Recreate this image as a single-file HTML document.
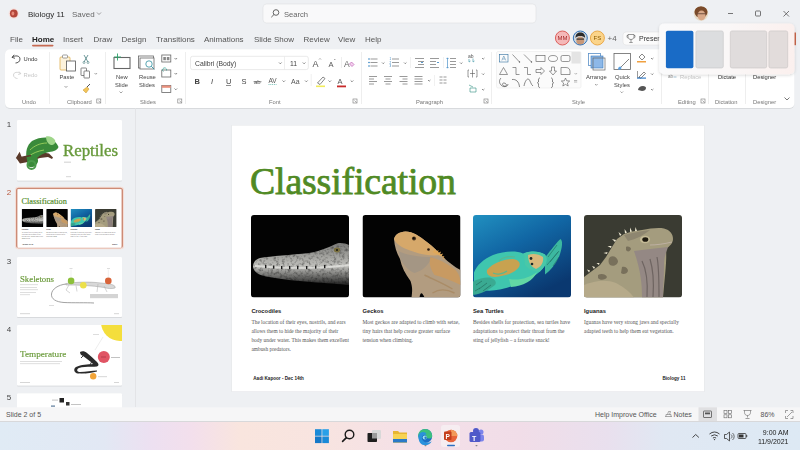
<!DOCTYPE html>
<html><head><meta charset="utf-8">
<style>
*{margin:0;padding:0}
html,body{width:800px;height:450px;overflow:hidden;background:#eef0f3}
svg{position:absolute;left:0;top:0;display:block;filter:blur(0.35px)}
text{font-family:"Liberation Sans",sans-serif}
.sr,.sr text{font-family:"Liberation Serif",serif}
.ui{font-size:8px;fill:#555}
.rl{font-size:5.8px;fill:#444}
.gl{font-size:5.8px;fill:#777}
.st{font-size:7px;fill:#555}
.ic{fill:none;stroke:#555;stroke-width:0.9}
</style></head><body>
<svg width="800" height="450" viewBox="0 0 800 450">
<defs>
  <linearGradient id="tb" x1="0" x2="1" y1="0" y2="0">
    <stop offset="0" stop-color="#e0ebf5"/>
    <stop offset="0.13" stop-color="#e2e8f4"/>
    <stop offset="0.19" stop-color="#ede0f1"/>
    <stop offset="0.24" stop-color="#f3dfec"/>
    <stop offset="0.30" stop-color="#f9e5de"/>
    <stop offset="0.40" stop-color="#f8e4e0"/>
    <stop offset="0.52" stop-color="#f4e0e8"/>
    <stop offset="0.65" stop-color="#f1dde8"/>
    <stop offset="0.76" stop-color="#e9e0ee"/>
    <stop offset="0.83" stop-color="#e0e8f3"/>
    <stop offset="1" stop-color="#dde9f4"/>
  </linearGradient>
  <filter id="sh" x="-5%" y="-5%" width="110%" height="115%">
    <feDropShadow dx="0" dy="0.5" stdDeviation="0.6" flood-color="#000" flood-opacity="0.18"/>
  </filter>
  <filter id="tex" x="0" y="0" width="100%" height="100%">
    <feTurbulence type="fractalNoise" baseFrequency="0.35" numOctaves="2" seed="3" result="n"/>
    <feColorMatrix in="n" type="matrix" values="0 0 0 0 0  0 0 0 0 0  0 0 0 0 0  0 0 0 2.2 -1.0" result="a"/>
    <feComposite in="SourceGraphic" in2="a" operator="in"/>
  </filter>
  <filter id="sh2" x="-10%" y="-10%" width="120%" height="130%">
    <feDropShadow dx="0" dy="1" stdDeviation="1.5" flood-color="#000" flood-opacity="0.16"/>
  </filter>
  <linearGradient id="popg" x1="0" x2="1" y1="0" y2="0">
    <stop offset="0" stop-color="#fafafb"/>
    <stop offset="0.5" stop-color="#faf7f7"/>
    <stop offset="1" stop-color="#fbf0ee"/>
  </linearGradient>
  <linearGradient id="turtbg" x1="0" y1="0" x2="0.6" y2="1">
    <stop offset="0" stop-color="#2190c0"/>
    <stop offset="0.45" stop-color="#1166a4"/>
    <stop offset="1" stop-color="#0a3870"/>
  </linearGradient>
  <linearGradient id="crocg" x1="0" y1="0" x2="0" y2="1">
    <stop offset="0" stop-color="#7a7a78"/>
    <stop offset="0.3" stop-color="#a0a09c"/>
    <stop offset="0.55" stop-color="#c0c0bc"/>
    <stop offset="0.8" stop-color="#6a6a68"/>
    <stop offset="1" stop-color="#1e1e1e"/>
  </linearGradient>
  <clipPath id="pc"><rect x="0" y="0" width="98" height="82.5" rx="3"/></clipPath>
  <g id="s2">
    <rect x="0" y="0" width="472" height="266" fill="#fff"/>
    <text x="18" y="68.2" class="sr" textLength="206" lengthAdjust="spacing" style="font-size:37.8px;fill:#508a24;stroke:#508a24;stroke-width:0.75">Classification</text>
    <!-- croc -->
    <g transform="translate(19,89.5)" clip-path="url(#pc)">
      <rect width="98" height="82.5" fill="#030303"/>
      <path d="M2,52 C2,47 5,44 9,43 C20,41 40,40 58,38 C70,36 78,32 86,28.5 C90,27.5 95,28.5 98,30 L98,70 C88,69 75,68 60,67 C45,66 30,64 18,62 C10,61 3,58 2,52 Z" fill="url(#crocg)"/>
      <path d="M2,52 C2,47 5,44 9,43 C20,41 40,40 58,38 C70,36 78,32 86,28.5 C90,27.5 95,28.5 98,30 L98,70 C88,69 75,68 60,67 C45,66 30,64 18,62 C10,61 3,58 2,52 Z" fill="#000" filter="url(#tex)" opacity="0.42"/>
      <path d="M4,51 C20,52.5 45,53.5 70,52.5 C80,52 90,51 98,50" stroke="#e4e4e0" stroke-width="2" fill="none" opacity="0.8"/>
      <g fill="#1a1a1a">
        <rect x="14" y="50" width="1.4" height="3.2"/><rect x="22" y="50.5" width="1.4" height="3.2"/><rect x="30" y="51" width="1.4" height="3.2"/>
        <rect x="38" y="51" width="1.4" height="3.2"/><rect x="46" y="51" width="1.4" height="3.2"/><rect x="55" y="51" width="1.4" height="3.2"/>
        <rect x="64" y="50.5" width="1.4" height="3.2"/><rect x="73" y="50" width="1.4" height="3.2"/>
      </g>
      <ellipse cx="86" cy="35" rx="3.2" ry="2.4" fill="#7a7040"/>
      <circle cx="86" cy="35" r="1" fill="#1a1a10"/>
    </g>
    <!-- gecko -->
    <g transform="translate(130.5,89.5)" clip-path="url(#pc)">
      <rect width="98" height="82.5" fill="#030303"/>
      <path d="M31.5,24 C33,19 37,17 43,16.5 C50,16.5 57,21 65,27.5 C71,32 76,37 81,42.5 C86,47 92,52 98,55 L98,82.5 L62,82.5 C60,78 58,76 57,82.5 L49,82.5 C50,76 50,72 48,66 C43,59 39,52 37.5,44 C34,38 32,31 31.5,24 Z" fill="#b29c80"/>
      <path d="M31.5,24 C33,19 37,17 43,16.5 C50,16.5 57,21 65,27.5 C70,31 74,35 78,40 C70,41 60,40 52,37 C42,34 34,30 31.5,24 Z" fill="#d6a86a"/>
      <path d="M36,36 C44,40 56,42 70,42 C66,50 60,56 52,58 C46,56 41,50 38,44 Z" fill="#a49684"/>
      <path d="M68,42 C76,44 84,48 92,54 C96,58 98,62 98,70 C90,66 80,62 72,60 C68,54 66,48 68,42 Z" fill="#c89a62"/>
      <path d="M62,60 C70,64 80,68 90,74 M70,78 C76,74 84,74 92,78" stroke="#a88860" stroke-width="1.4" fill="none" opacity="0.8"/>
      <path d="M70,37 l3,-3 l0,3 l3,-2 l-0.5,3 l3,-1.5 l-1,3 l3,-1 l-1.5,3 l3,-0.5 l-2,2.5 l3,0 z" fill="#e0a858"/>
      <circle cx="51.5" cy="23.5" r="2" fill="#4a3420"/>
      <circle cx="51.2" cy="23.2" r="1.1" fill="#140c06"/>
      <circle cx="66" cy="34.5" r="1.3" fill="#2a1a10"/>
    </g>
    <!-- turtle -->
    <g transform="translate(241,89.5)" clip-path="url(#pc)">
      <rect width="98" height="82.5" fill="url(#turtbg)"/>
      <path d="M72,42.5 C78,35 84,27 87.5,24 C90,26 89.5,32 86,42 C82,50 78,55 72,59.5 Z" fill="#3cb8a0"/>
      <path d="M75,42 l9,-12 M77,47 l8,-10 M80,51 l6,-9 M74,50 l12,-14" stroke="#164a48" stroke-width="0.7" opacity="0.6"/>
      <path d="M1,57.5 C4,50 10,44.5 20,40 C30,36.5 42,35 50,38.5 C56,36 64,35.5 72,39.5 C75,44 74,50 67,56.5 C58,64 47,70 27,74.5 C17,76.5 8,76 1,72 Z" fill="#3fc6ae"/>
      <path d="M14,55 C20,48 30,44 40,44 C46,45 48,48 46,52 C42,58 32,61 22,62 C16,62 13,59 14,55 Z" fill="#c8a250"/>
      <path d="M26,46 C30,42 36,41 42,42 M20,58 c4,2 10,1 14,-2" stroke="#5ab890" stroke-width="1.2" fill="none"/>
      <path d="M51,38.5 C58,35.5 66,36 72,39.5 C75,44 74,50 67,56.5 C62,57 56,55 52,50 Z" fill="#48c8a8"/>
      <path d="M55,40 C60,38 66,39 70,42 C71,47 68,52 63,54 C58,52 55,47 55,40 Z" fill="#d8b87a"/>
      <circle cx="58" cy="43.5" r="1.4" fill="#1a2a2a"/><circle cx="59" cy="49" r="1.3" fill="#1a2a2a"/>
      <path d="M36,64 C46,66 56,63 64,57 C60,66 50,71 38,72 Z" fill="#62d8a4"/>
      <path d="M0,66.5 C6,63 13,62 17,62.5 C22,64 24,67 22,70 C16,75 8,79 0,80 Z" fill="#3aaa92"/>
      <path d="M3,70 l6,-4 M6,74 l8,-6 M10,76 l8,-6 M2,76 l5,-3" stroke="#164a40" stroke-width="0.7" opacity="0.6"/>
    </g>
    <!-- iguana -->
    <g transform="translate(352,89.5)" clip-path="url(#pc)">
      <rect width="98" height="82.5" fill="#3a3b32"/>
      <path d="M0,62 L8,56 L16,50 L22,42 L28,32 L33,24 L40,19 L48,16.5 L58,15 C66,13.5 74,12.5 80,13.5 C86,15 89,19 89,24 C89,28 86,31 82,34 C83,45 81,60 79,82.5 L0,82.5 Z" fill="#a49c7e"/>
      <path d="M50,36 C60,35 72,33 84,32 C82,38 80,42 80,50 C80,62 79,72 79,82.5 L58,82.5 C58,70 57,56 50,36 Z" fill="#948884"/>
      <path d="M58,46 c4,8 6,20 5,36 M66,44 c3,10 4,24 3,38 M73,42 c2,10 2,26 2,40" stroke="#5e5552" stroke-width="1.2" fill="none" opacity="0.7"/>
      <path d="M0,70 C10,66 22,64 32,68 C40,72 46,77 50,82.5 L0,82.5 Z" fill="#b6aa8a"/>
      <path d="M26,42 c3,-2 7,0 8,4 c0,4 -5,6 -8,4 c-2,-2 -2,-6 0,-8 z M14,60 c3,-2 8,-1 9,2 c-1,3 -7,4 -9,1 z M38,52 c3,-1 6,1 6,4 c-1,3 -5,4 -7,2 z M42,32 c2,-1 5,0 5,2 c-1,3 -4,3 -5,1 z" fill="#5c5444" opacity="0.6"/>
      <path d="M40,20 C48,18 56,16 66,15 C60,20 52,24 44,26 Z" fill="#8e8670"/>
      <g fill="#ece6d0">
        <path d="M36,21 l-1.5,-4 l3,2.5 z"/><path d="M41,18.5 l-0.5,-4.5 l2.5,3.5 z"/><path d="M46,17 l0,-4.5 l2,4 z"/><path d="M51,16 l0.5,-4 l1.5,4 z"/>
        <path d="M31,27 l-3,-3 l4,1 z"/><path d="M27,33 l-3.5,-2 l4,0 z"/><path d="M23,39 l-3.5,-1 l4,-1 z"/>
        <path d="M10,54 l-2,-3 l3,1 z"/><path d="M5,57.5 l-2,-3 l3,1 z"/><path d="M15,50 l-2.5,-2 l3,0 z"/>
      </g>
      <ellipse cx="61" cy="24.5" rx="5" ry="3.8" fill="#c4ba96"/>
      <ellipse cx="61.3" cy="24.5" rx="3" ry="2.3" fill="#1e1a10"/>
      <path d="M66,30 C72,30 80,29 88,27" stroke="#c8b8b0" stroke-width="1" fill="none" opacity="0.7"/>
    </g>
    <g style="font-size:5.8px;font-weight:bold;fill:#222">
      <text x="19.4" y="187.2">Crocodiles</text>
      <text x="130.5" y="187.2">Geckos</text>
      <text x="241" y="187.2">Sea Turtles</text>
      <text x="352" y="187.2">Iguanas</text>
    </g>
    <g class="sr" style="font-size:5.4px;fill:#555">
      <text x="19.4" y="198.8">The location of their eyes, nostrils, and ears</text>
      <text x="19.4" y="207.7">allows them to hide the majority of their</text>
      <text x="19.4" y="216.6">body under water. This makes them excellent</text>
      <text x="19.4" y="225.5">ambush predators.</text>
      <text x="130.5" y="198.8">Most geckos are adapted to climb with setae,</text>
      <text x="130.5" y="207.7">tiny hairs that help create greater surface</text>
      <text x="130.5" y="216.6">tension when climbing.</text>
      <text x="241" y="198.8">Besides shells for protection, sea turtles have</text>
      <text x="241" y="207.7">adaptations to protect their throat from the</text>
      <text x="241" y="216.6">sting of jellyfish – a favorite snack!</text>
      <text x="352" y="198.8">Iguanas have very strong jaws and specially</text>
      <text x="352" y="207.7">adapted teeth to help them eat vegetation.</text>
    </g>
    <g style="font-size:4.6px;font-weight:bold;fill:#222">
      <text x="21.3" y="254.4">Aadi Kapoor - Dec 14th</text>
      <text x="430.5" y="254.4">Biology 11</text>
    </g>
  </g>
</defs>

<!-- ===== TITLE BAR ===== -->
<g id="titlebar">
  <circle cx="13.8" cy="13.5" r="5.2" fill="#f6e2df"/>
  <circle cx="13.8" cy="13.5" r="3.9" fill="#b4463a"/>
  <ellipse cx="12.9" cy="13.6" rx="1.4" ry="2" fill="#f29a88" opacity="0.8"/>
  <text x="28" y="17" class="ui" style="fill:#2a2a2a">Biology 11</text>
  <text x="72" y="17" class="ui" style="fill:#666">Saved</text>
  <path d="M97 12.5 l2 2 l2 -2" fill="none" stroke="#777" stroke-width="0.7"/>
  <rect x="263" y="4" width="273" height="19" rx="3.5" fill="#f9f9fa" stroke="#dedfe2" stroke-width="0.6"/>
  <circle cx="276" cy="12.5" r="2.8" class="ic" style="stroke:#555"/>
  <path d="M274 14.5 l-2.7 2.7" class="ic"/>
  <text x="284" y="16.6" class="ui" style="font-size:7.6px;fill:#666">Search</text>
  <clipPath id="av1"><circle cx="701" cy="13.5" r="7.3"/></clipPath>
  <g clip-path="url(#av1)">
    <rect x="693" y="5" width="16" height="17" fill="#e8dcc8"/>
    <ellipse cx="701" cy="12" rx="6.5" ry="6" fill="#7a4a2a"/>
    <ellipse cx="701.5" cy="15.5" rx="4" ry="5" fill="#d8a888"/>
    <rect x="697" y="13" width="9" height="1.3" fill="#6a4a3a" opacity="0.7"/>
  </g>
  <path d="M728 13.5 h5" stroke="#555" stroke-width="0.8"/>
  <rect x="755.5" y="11" width="5" height="5" rx="0.8" class="ic" style="stroke-width:0.8"/>
  <path d="M783.5 11 l5.5 5.5 M789 11 l-5.5 5.5" stroke="#555" stroke-width="0.8"/>
</g>

<!-- ===== TABS ===== -->
<g id="tabs">
  <text x="10" y="42" class="ui">File</text>
  <text x="32" y="42" class="ui" style="fill:#222;font-weight:bold">Home</text>
  <rect x="32" y="44.8" width="21.5" height="1.6" rx="0.8" fill="#c66a52"/>
  <text x="63" y="42" class="ui">Insert</text>
  <text x="93.5" y="42" class="ui">Draw</text>
  <text x="121.5" y="42" class="ui">Design</text>
  <text x="156" y="42" class="ui">Transitions</text>
  <text x="204" y="42" class="ui">Animations</text>
  <text x="254" y="42" class="ui">Slide Show</text>
  <text x="303.5" y="42" class="ui">Review</text>
  <text x="338" y="42" class="ui">View</text>
  <text x="365" y="42" class="ui">Help</text>
  <!-- collaborators -->
  <circle cx="562.4" cy="38" r="7" fill="#f4b8b8" stroke="#d9534f" stroke-width="0.9"/>
  <text x="562.4" y="40.2" text-anchor="middle" style="font-size:6px;fill:#a52a2a">MM</text>
  <circle cx="580.3" cy="38" r="7" fill="#cfd8e0" stroke="#2f6fb5" stroke-width="1"/>
  <clipPath id="av2"><circle cx="580.3" cy="38" r="6.4"/></clipPath>
  <g clip-path="url(#av2)">
    <ellipse cx="580.3" cy="41" rx="4" ry="4.5" fill="#c89878"/>
    <path d="M575.5 38 c0 -4 2 -5.5 4.8 -5.5 c3 0 4.8 1.5 4.8 5.5 c-1 -1.5 -3 -2 -4.8 -2 c-2 0 -3.8 0.5 -4.8 2 z" fill="#2a2a2a"/>
    <rect x="576.5" y="38.5" width="7.6" height="1.2" fill="#333"/>
    <rect x="574" y="44" width="13" height="4" fill="#5a6a8a"/>
  </g>
  <circle cx="597.4" cy="38" r="7" fill="#fbd48a" stroke="#e8a33d" stroke-width="0.9"/>
  <text x="597.4" y="40.2" text-anchor="middle" style="font-size:6px;fill:#8a5a00">FS</text>
  <text x="607.5" y="41" class="ui" style="fill:#666">+4</text>
  <rect x="623" y="32" width="45" height="13" rx="3" fill="#fbfbfb" stroke="#dddddd" stroke-width="0.5"/>
  <text x="639" y="41.3" style="font-size:7px;fill:#333">Presen</text>
  <path d="M628 34.5 h6 v2 c0 2 -1.3 3 -3 3 c-1.7 0 -3 -1 -3 -3 z M631 39.5 v2.5 M629.3 42.5 h3.4 M628 35.5 h-1 v1 c0 1 0.5 1.5 1.2 1.5 M634 35.5 h1 v1 c0 1 -0.5 1.5 -1.2 1.5" fill="none" stroke="#555" stroke-width="0.6"/>
</g>

<!-- ===== RIBBON ===== -->
<rect x="5" y="49.3" width="789.5" height="58.6" rx="5" fill="#fff" filter="url(#sh)"/>
<g id="ribbon">
  <!-- separators -->
  <g fill="#e3e3e3">
    <rect x="49" y="52" width="0.6" height="52"/>
    <rect x="105" y="52" width="0.6" height="52"/>
    <rect x="185.3" y="52" width="0.6" height="52"/>
    <rect x="361.3" y="52" width="0.6" height="52"/>
    <rect x="491.3" y="52" width="0.6" height="52"/>
    <rect x="661" y="52" width="0.6" height="52"/>
    <rect x="708.4" y="52" width="0.6" height="52"/>
    <rect x="745" y="52" width="0.6" height="52"/>
  </g>
  <!-- group labels -->
  <g class="gl">
    <text x="22" y="103.5">Undo</text>
    <text x="67" y="103.5">Clipboard</text>
    <text x="140" y="103.5">Slides</text>
    <text x="269" y="103.5">Font</text>
    <text x="416" y="103.5">Paragraph</text>
    <text x="572" y="103.5">Style</text>
    <text x="678" y="103.5">Editing</text>
    <text x="715" y="103.5">Dictation</text>
    <text x="753" y="103.5">Designer</text>
  </g>
  <!-- launchers -->
  <g fill="none" stroke="#777" stroke-width="0.6">
    <rect x="96.8" y="99" width="4" height="4"/><path d="M98.3 100.5 l2 2"/>
    <rect x="177.8" y="99" width="4" height="4"/><path d="M179.3 100.5 l2 2"/>
    <rect x="353" y="99" width="4" height="4"/><path d="M354.5 100.5 l2 2"/>
    <rect x="484" y="99" width="4" height="4"/><path d="M485.5 100.5 l2 2"/>
    <rect x="701" y="99" width="4" height="4"/><path d="M702.5 100.5 l2 2"/>
  </g>
  <path d="M784.5 97.5 l2.5 2.5 l2.5 -2.5" fill="none" stroke="#555" stroke-width="0.8"/>
  <!-- Undo group -->
  <path d="M14.2 54.8 l-2.2 2.6 l3 0.9 M12.2 57.4 C15 55 20 55.5 20 59 C20 61.8 17.5 63 15.5 63" fill="none" stroke="#444" stroke-width="0.9"/>
  <text x="23.5" y="60.5" class="rl" style="fill:#333">Undo</text>
  <path d="M19 71.5 l1.8 2.2 l-2.6 0.8 M20.6 73.6 C18 71.5 13.5 72 13.5 75 C13.5 77.5 16 78.5 17.5 78.5" fill="none" stroke="#ccc" stroke-width="0.8"/>
  <text x="23.5" y="76.5" class="rl" style="fill:#c8c8c8">Redo</text>
  <!-- Clipboard -->
  <rect x="60" y="57" width="10" height="13" rx="1" fill="#fdf3dc" stroke="#e0b050" stroke-width="0.8"/>
  <rect x="62.5" y="55" width="5" height="3" rx="0.8" fill="#fff" stroke="#777" stroke-width="0.7"/>
  <rect x="66.5" y="61" width="9" height="10" fill="#fff" stroke="#555" stroke-width="0.8"/>
  <text x="59.5" y="79" class="rl">Paste</text>
  <path d="M64.5 86 l1.5 1.5 l1.5 -1.5" fill="none" stroke="#666" stroke-width="0.6"/>
  <path d="M84 55 l4 7 M88 55 l-4 7" stroke="#4a7f80" stroke-width="0.8"/>
  <circle cx="84" cy="62.5" r="1" fill="none" stroke="#4a7f80" stroke-width="0.6"/>
  <circle cx="88" cy="62.5" r="1" fill="none" stroke="#4a7f80" stroke-width="0.6"/>
  <rect x="81" y="68" width="5.5" height="7.5" rx="0.5" fill="none" stroke="#555" stroke-width="0.7"/>
  <rect x="84" y="71" width="5.5" height="7" rx="0.5" fill="#fff" stroke="#555" stroke-width="0.7"/>
  <path d="M94.5 73 l1.3 1.3 l1.3 -1.3" fill="none" stroke="#666" stroke-width="0.6"/>
  <path d="M83 90 l4 -3 l2 2 l-3 4 z" fill="#f2c45a" stroke="#c9962a" stroke-width="0.5"/>
  <path d="M87 87 l3 -3" stroke="#555" stroke-width="1"/>
  <!-- Slides -->
  <rect x="114" y="57.5" width="16" height="11" fill="none" stroke="#666" stroke-width="1.1"/>
  <path d="M117.5 53.5 v7 M114 57 h7" stroke="#2aa36a" stroke-width="0.9"/>
  <text x="116" y="79" class="rl">New</text>
  <text x="115" y="87" class="rl">Slide</text>
  <path d="M119.5 91.5 l1.5 1.5 l1.5 -1.5" fill="none" stroke="#666" stroke-width="0.6"/>
  <rect x="138.5" y="56" width="15" height="12" fill="none" stroke="#666" stroke-width="0.8"/>
  <rect x="140" y="58" width="14" height="11" fill="#fff" stroke="#666" stroke-width="0.8"/>
  <circle cx="149" cy="64" r="3.2" fill="#fff" stroke="#2f8f9f" stroke-width="0.8"/>
  <path d="M151.3 66.3 l3 3" stroke="#2f8f9f" stroke-width="0.9"/>
  <text x="139" y="79" class="rl">Reuse</text>
  <text x="139" y="87" class="rl">Slides</text>
  <rect x="161.8" y="55" width="9" height="7" fill="#fff" stroke="#666" stroke-width="0.8"/>
  <rect x="163.3" y="57" width="2.6" height="3.2" fill="#888"/><rect x="166.8" y="57" width="2.6" height="3.2" fill="#888"/>
  <rect x="161.8" y="70" width="9" height="7" fill="#fff" stroke="#666" stroke-width="0.8"/>
  <path d="M163.5 71.5 a2 2 0 1 1 3 -1" fill="none" stroke="#2f9f8f" stroke-width="0.7"/>
  <rect x="161.8" y="85.5" width="9" height="7" fill="#fff" stroke="#666" stroke-width="0.8"/>
  <rect x="161.8" y="85.5" width="9" height="2.3" fill="#e98f7c"/>
  <g fill="none" stroke="#666" stroke-width="0.75">
    <path d="M174.5 58 l1.3 1.3 l1.3 -1.3"/><path d="M174.5 73 l1.3 1.3 l1.3 -1.3"/><path d="M174.5 88.5 l1.3 1.3 l1.3 -1.3"/>
  </g>
  <!-- Font -->
  <rect x="190.5" y="56.3" width="117.8" height="13.3" rx="2" fill="#fff" stroke="#dcdcdc" stroke-width="0.6"/>
  <rect x="284.3" y="56.5" width="0.6" height="13" fill="#e3e3e3"/>
  <text x="195" y="66" style="font-size:6.8px;fill:#444">Calibri (Body)</text>
  <text x="290" y="66" style="font-size:6.8px;fill:#444">11</text>
  <path d="M279 62.5 l1.3 1.3 l1.3 -1.3 M302.8 62.5 l1.3 1.3 l1.3 -1.3" fill="none" stroke="#666" stroke-width="0.75"/>
  <text x="312.5" y="67" style="font-size:9px;fill:#555">A</text>
  <path d="M319 59.5 l1 -1 l1 1" fill="none" stroke="#555" stroke-width="0.5"/>
  <text x="328.5" y="67" style="font-size:7.5px;fill:#555">A</text>
  <path d="M334 59 l0.8 0.8 l0.8 -0.8" fill="none" stroke="#555" stroke-width="0.5"/>
  <rect x="341" y="57" width="0.6" height="11" fill="#e3e3e3"/>
  <text x="344" y="67" style="font-size:8.5px;fill:#666">A</text>
  <path d="M349.5 64 l2.5 2.5 l2 -2 l-2.5 -2.5 z" fill="#f5d0ee" stroke="#b04aa8" stroke-width="0.6"/>
  <g style="font-size:7.5px;fill:#444">
    <text x="194.5" y="84" style="font-weight:bold">B</text>
    <text x="211" y="84" style="font-style:italic">I</text>
    <text x="226" y="83.5">U</text>
    <text x="241.5" y="84">S</text>
  </g>
  <rect x="226" y="85" width="5" height="0.6" fill="#444"/>
  <text x="254" y="83.5" style="font-size:6px;fill:#555">ab</text>
  <rect x="253.5" y="81.5" width="8" height="0.6" fill="#555"/>
  <text x="268.5" y="82.5" style="font-size:6.5px;fill:#555">AV</text>
  <path d="M268.5 84.5 h8" stroke="#2f9f8f" stroke-width="0.6" stroke-dasharray="1 0.8"/>
  <text x="291" y="84" style="font-size:7px;fill:#555">Aa</text>
  <rect x="310.8" y="74" width="0.6" height="12" fill="#e3e3e3"/>
  <path d="M317.5 83 l5.5 -6 l2 1.5 l-5 6 z" fill="#fff" stroke="#555" stroke-width="0.7"/>
  <rect x="316" y="85.5" width="9" height="1.6" fill="#f1ec5c"/>
  <text x="337.5" y="84" style="font-size:7.5px;fill:#555">A</text>
  <rect x="337" y="85.5" width="9" height="1.8" fill="#c82a2a"/>
  <g fill="none" stroke="#666" stroke-width="0.75">
    <path d="M282.5 80.5 l1.3 1.3 l1.3 -1.3"/><path d="M305 80.5 l1.3 1.3 l1.3 -1.3"/><path d="M328.5 80.5 l1.3 1.3 l1.3 -1.3"/><path d="M350.7 80.5 l1.3 1.3 l1.3 -1.3"/>
  </g>
  <!-- Paragraph -->
  <g stroke="#555" stroke-width="0.6" fill="none">
    <path d="M370.5 59 h7 M370.5 62.5 h7 M370.5 66 h7"/>
    <path d="M392 59 h7 M392 62.5 h7 M392 66 h7"/>
    <path d="M415 58.5 h9 M418 61.5 h6 M418 64.5 h6 M415 67.5 h9"/>
    <path d="M430 58.5 h9 M430 61.5 h6 M430 64.5 h6 M430 67.5 h9"/>
    <path d="M450 58.5 h6 M450 61.5 h6 M450 64.5 h6 M450 67.5 h6"/>
    <path d="M369 76.5 h8 M369 79 h5 M369 81.5 h8 M369 84 h5"/>
    <path d="M384 76.5 h8 M385.5 79 h5 M384 81.5 h8 M385.5 84 h5"/>
    <path d="M399.5 76.5 h8 M402.5 79 h5 M399.5 81.5 h8 M402.5 84 h5"/>
    <path d="M414.5 76.5 h8 M414.5 79 h8 M414.5 81.5 h8 M414.5 84 h8"/>
    <path d="M439.5 77 h3 M439.5 80 h3 M439.5 83 h3 M443.5 77 h3 M443.5 80 h3 M443.5 83 h3"/>
  </g>
  <g fill="#2f7fbf">
    <circle cx="369" cy="59" r="0.8"/><circle cx="369" cy="62.5" r="0.8"/><circle cx="369" cy="66" r="0.8"/>
  </g>
  <g style="font-size:3px;fill:#2f7fbf"><text x="389.5" y="60">1</text><text x="389.5" y="63.5">2</text><text x="389.5" y="67">3</text></g>
  <path d="M421 62.5 l2 0 M437 62.5 l2 0" stroke="#2f7fbf" stroke-width="0.8"/>
  <path d="M447.5 58 v10 M446.5 59 l1 -1.2 l1 1.2 M446.5 67 l1 1.2 l1 -1.2" fill="none" stroke="#2f7fbf" stroke-width="0.6"/>
  <rect x="410" y="57" width="0.5" height="11" fill="#e3e3e3"/>
  <rect x="443" y="57" width="0.5" height="11" fill="#e3e3e3"/>
  <rect x="434" y="75" width="0.5" height="11" fill="#e3e3e3"/>
  <g fill="none" stroke="#666" stroke-width="0.75">
    <path d="M382 62.5 l1.2 1.2 l1.2 -1.2"/><path d="M404 62.5 l1.2 1.2 l1.2 -1.2"/><path d="M460 62.5 l1.2 1.2 l1.2 -1.2"/><path d="M428 80 l1.2 1.2 l1.2 -1.2"/>
    <path d="M482 58 l1.2 1.2 l1.2 -1.2"/><path d="M482 73.5 l1.2 1.2 l1.2 -1.2"/><path d="M482 89 l1.2 1.2 l1.2 -1.2"/>
  </g>
  <text x="468" y="57.5" style="font-size:5px;fill:#555">ab</text>
  <path d="M469 59 v3 l1.5 -1 M473 58.5 v3.5 l1.5 -1" fill="none" stroke="#2f8f9f" stroke-width="0.6"/>
  <path d="M469 70 h-1 v7 h1 M476 70 h1 v7 h-1 M472.5 69.5 v8 M470 73.5 h5" fill="none" stroke="#555" stroke-width="0.6"/>
  <path d="M469 85 l4 2 M470 88 h6 v4 h-6 z" fill="none" stroke="#2f8f7f" stroke-width="0.6"/>
  <!-- Shapes gallery -->
  <rect x="496.5" y="51.5" width="84.5" height="36.5" rx="1.5" fill="#fbfbfb" stroke="#e6e6e6" stroke-width="0.5"/>
  <rect x="571.5" y="52" width="9.2" height="11.5" fill="#e4e4e4"/>
  <path d="M574.5 73 l1.3 1.3 l1.3 -1.3 M574 80.5 h3.2 M574 82 h3.2" fill="none" stroke="#777" stroke-width="0.5"/>
  <g fill="none" stroke="#555" stroke-width="0.6">
    <rect x="499.5" y="54.5" width="8.5" height="7.5" stroke="#2f6f9f"/><path d="M501.8 60.5 l2 -4.5 l2 4.5 M502.5 59 h2.6" stroke-width="0.45" stroke="#2f6f9f"/>
    <path d="M512.5 54.5 l7 7.5"/>
    <path d="M524 54.5 l7.5 7.5"/>
    <rect x="536" y="55.5" width="9" height="6"/>
    <ellipse cx="553" cy="58.5" rx="4.5" ry="3"/>
    <rect x="561" y="55.5" width="9" height="6" rx="1.5"/>
    <path d="M499.5 74.5 l4 -7 l4 7 z"/>
    <path d="M512.5 67.5 h3.5 v7 h3.5"/>
    <path d="M524 67.5 h3.5 v7 h3.5"/>
    <path d="M536 69.5 h5 v-2 l3.5 3.5 l-3.5 3.5 v-2 h-5 z"/>
    <path d="M551.5 67 h3 v4 h2 l-3.5 4 l-3.5 -4 h2 z"/>
    <path d="M561 67.5 h5 c3 0 4 2 4 4 v3 h-9 z"/>
    <path d="M501 78 c-2 2 -2 5 0 7 c2 2 4 2 5 1 c1 -1 0 -3 -2 -3 c-2 0 -2 2 0 3 c2 1 4 0 4 -2" stroke-width="0.7"/>
    <path d="M512 79.5 c4 -0.5 7 2 7.5 7.5" stroke-width="0.7"/>
    <path d="M524 86 c1 -5 3 -7.5 4.5 -7 c1.5 0.5 2.5 6 4.5 7" stroke-width="0.7"/>
    <path d="M540 78 c-1.2 0 -1.5 0.8 -1.5 2 v2 l-1.2 0.8 l1.2 0.8 v2 c0 1.2 0.3 2 1.5 2" stroke-width="0.7"/>
    <path d="M551 78 c1.2 0 1.5 0.8 1.5 2 v2 l1.2 0.8 l-1.2 0.8 v2 c0 1.2 -0.3 2 -1.5 2" stroke-width="0.7"/>
    <path d="M565.5 78 l1.2 2.8 l3 0.2 l-2.3 2 l0.8 3 l-2.7 -1.6 l-2.7 1.6 l0.8 -3 l-2.3 -2 l3 -0.2 z"/>
  </g>
  <circle cx="519.5" cy="62" r="0.7" fill="#555"/><circle cx="531.5" cy="62" r="0.7" fill="#555"/>
  <!-- Arrange / Quick styles -->
  <rect x="588.5" y="53.5" width="12" height="12" fill="none" stroke="#5a8fc8" stroke-width="0.8"/>
  <rect x="591" y="56" width="12" height="12" fill="#8db8e8" stroke="#3a78b8" stroke-width="0.6"/>
  <rect x="593" y="58" width="12" height="12" fill="none" stroke="#666" stroke-width="0.7"/>
  <text x="586" y="79" class="rl">Arrange</text>
  <path d="M595 84 l1.3 1.3 l1.3 -1.3" fill="none" stroke="#666" stroke-width="0.6"/>
  <rect x="614" y="53.5" width="16.5" height="16" fill="#fff" stroke="#666" stroke-width="0.8"/>
  <path d="M619 69 l10 -10" stroke="#666" stroke-width="0.8"/>
  <path d="M618 69.5 c0 -2 1 -3 2.5 -3 l1 1 c0 1.5 -1 2.5 -3.5 2 z" fill="#5aa0e0"/>
  <text x="615" y="79" class="rl">Quick</text>
  <text x="614" y="87" class="rl">Styles</text>
  <path d="M620.5 91.5 l1.3 1.3 l1.3 -1.3" fill="none" stroke="#666" stroke-width="0.6"/>
  <path d="M639 57 l3 -3 l3 3 l-3 3 z" fill="#fff" stroke="#555" stroke-width="0.7"/>
  <rect x="637" y="61" width="9" height="1.5" fill="#f0a040"/>
  <path d="M639 77 l5 -5 l1.5 1.5 l-5 5 z" fill="#fff" stroke="#555" stroke-width="0.7"/>
  <path d="M637.5 71 v6.5 h3" fill="none" stroke="#555" stroke-width="0.6"/>
  <rect x="637" y="77.5" width="9" height="1.2" fill="#3a7fc8"/>
  <path d="M638 90 c0 -2 2 -4 5 -4 c2 0 3 1 3 2 c0 2 -2 3 -4 3 z" fill="#555"/>
  <g fill="none" stroke="#666" stroke-width="0.75">
    <path d="M651 58 l1.2 1.2 l1.2 -1.2"/><path d="M651 73.5 l1.2 1.2 l1.2 -1.2"/><path d="M651 89 l1.2 1.2 l1.2 -1.2"/>
  </g>
  <text x="718" y="79" class="rl" style="fill:#333">Dictate</text>
  <text x="753" y="79" class="rl" style="fill:#333">Designer</text>
  <text x="680" y="79" class="rl" style="fill:#c8c8c8">Replace</text><text x="668" y="78" style="font-size:4.5px;fill:#888">ab</text><path d="M673.5 77 h3" fill="none" stroke="#6a9ab8" stroke-width="0.6"/>
</g>

<!-- ===== LEFT PANE ===== -->
<rect x="135" y="108" width="0.8" height="299" fill="#e0e1e4"/>
<g id="thumbs">
  <g style="font-size:8px;fill:#444">
    <text x="6.8" y="127">1</text>
    <text x="6.8" y="263.5">3</text>
    <text x="6.8" y="332">4</text>
    <text x="6.8" y="399.5">5</text>
  </g>
  <text x="6.8" y="195.2" style="font-size:8px;fill:#b8583c">2</text>
  <!-- thumb 1 -->
  <g filter="url(#sh)">
    <rect x="17" y="120" width="105" height="60.5" rx="1" fill="#fff"/>
    <rect x="17" y="257" width="105" height="60" rx="1" fill="#fff"/>
    <rect x="17" y="325" width="105" height="60.5" rx="1" fill="#fff"/>
    <rect x="17" y="393.2" width="105" height="20" rx="1" fill="#fff"/>
  </g>
  <g id="t1">
    <path d="M16.5 158.5 l3 -5 l1.5 4 l10 -2 l12 -3 l6 1 l4 4 l-1 1.5 l-4 -2 l-8 1 l-12 4 l-8 1.5 z" fill="#5a3a2a"/>
    <path d="M27 160 C25 152 27 145 32 141 C37 138 43 137 48 137.5 C53 139 57 143 58.5 147 C57.5 150 54 151.5 49 152 C44 153 40 155 37 158 C39 160 38 163 36 165 C33 168 29 168 27.5 165 Z" fill="#3a8a3a"/>
    <path d="M46 136.5 C49 135.5 53 137 55 140 C56 143 54 145 51 145 C48 144 46 141 46 136.5 Z" fill="#9fd68a"/>
    <path d="M30 150 C34 146 40 143 47 143 M29 156 C33 153 38 151 44 150" stroke="#a8d860" stroke-width="1" fill="none" opacity="0.8"/>
    <circle cx="31.5" cy="165" r="4" fill="none" stroke="#4a9a4a" stroke-width="2"/>
    <path d="M16.5 158.5 l3 -5 l1.5 4 l10 -2" fill="none" stroke="#5a3a2a" stroke-width="1.5"/>
  <text x="63" y="155.8" class="sr" textLength="55" lengthAdjust="spacing" style="font-size:16.8px;fill:#689a3c;stroke:#689a3c;stroke-width:0.4">Reptiles</text>
    <rect x="64" y="161.8" width="7" height="0.6" fill="#b0b0b0"/>
    <rect x="66" y="176.5" width="5" height="0.6" fill="#bbb"/>
  </g>
  <!-- thumb 2 (selected) -->
  <rect x="15.6" y="187.3" width="107.8" height="61.4" rx="2.6" fill="none" stroke="#f4ddd6" stroke-width="1.2"/>
  <rect x="16.9" y="188.6" width="105.2" height="58.8" rx="1.8" fill="#fff" stroke="#cd8b76" stroke-width="1.8"/>
  <g transform="translate(17.5,189.2) scale(0.2203)"><use href="#s2"/></g>
  <!-- thumb 3 -->
  <g id="t3">
    <text x="20" y="281.5" class="sr" style="font-size:8.75px;fill:#6a9a3a;stroke:#6a9a3a;stroke-width:0.15">Skeletons</text>
    <g fill="#c8c8c8"><rect x="20" y="284.5" width="18" height="0.6"/><rect x="20" y="287" width="17" height="0.6"/><rect x="20" y="289.5" width="18" height="0.6"/><rect x="20" y="292" width="16" height="0.6"/><rect x="20" y="294.5" width="10" height="0.6"/></g>
    <path d="M66 284 C58 285 52 289 51.5 294 C51 299 56 302 64 302.5 C74 303 86 302.5 94 303" fill="none" stroke="#8a8a8a" stroke-width="0.8"/>
    <path d="M66 283.5 C74 282.5 84 281.5 96 282.5 C102 283 106 283.5 110 284 C114 285 116 286.5 115 288 C112 289 107 288.5 104 287.5 C92 285.5 78 285 66 285 Z" fill="#d8d8d8" stroke="#8a8a8a" stroke-width="0.4"/>
    <rect x="90" y="294" width="28" height="4.2" fill="#d4d4d4"/>
    <path d="M69 285 l-3 5 l4 3 M76 285.5 l1 6 M98 284 l-1 8 M104 286 l3 6" fill="none" stroke="#aaa" stroke-width="0.5"/>
    <circle cx="71.1" cy="280.9" r="3.3" fill="#8cc03a"/>
    <circle cx="83.3" cy="285.3" r="3.3" fill="#ece04a"/>
    <circle cx="108.3" cy="280.9" r="3.3" fill="#d8643a"/>
    <path d="M71 277.5 v-8 M108.3 277.5 v-8" stroke="#ccc" stroke-width="0.3"/>
    <rect x="69.5" y="268" width="3" height="0.5" fill="#bbb"/><rect x="107" y="268" width="3" height="0.5" fill="#bbb"/>
    <rect x="49" y="305" width="5" height="0.5" fill="#bbb"/>
    <rect x="20" y="313.5" width="10" height="0.6" fill="#bbb"/>
    <rect x="114" y="313.5" width="5" height="0.6" fill="#bbb"/>
  </g>
  <!-- thumb 4 -->
  <g id="t4">
    <clipPath id="t4c"><rect x="17" y="325" width="105" height="60.5"/></clipPath>
    <g clip-path="url(#t4c)">
      <circle cx="120" cy="322" r="19" fill="#f4de3c"/>
    </g>
    <text x="20" y="357" class="sr" style="font-size:9.2px;fill:#6a9a3a;stroke:#6a9a3a;stroke-width:0.15">Temperature</text>
    <g fill="#c8c8c8"><rect x="20" y="361" width="42" height="0.6"/><rect x="20" y="363.5" width="40" height="0.6"/></g>
    <path d="M103 337 l-8 13" stroke="#ccc" stroke-width="0.35"/>
    <rect x="93" y="334" width="6" height="0.5" fill="#bbb"/>
    <path d="M80 352 C82 350.5 85 351 87 353 C90 355.5 94 359 97 362 C99 364 99 366 97 366.5 C92 367 84 366 79 368 C76 369.5 77 372 80 372 C86 372 92 370.5 97 370.5 L97 371.5 C92 373 84 374 78 373.5 C74 373 73 369 76 367 C81 364.5 88 364.5 93 364 C90 361 86 358 83 356 C81 355 80 354 80 352 Z" fill="#2a2a2a"/>
    <path d="M84 355 l-3 3 M92 361 l-2 4" stroke="#2a2a2a" stroke-width="0.9"/>
    <circle cx="103.8" cy="357" r="6" fill="#e05464"/>
    <rect x="101" y="356.5" width="5" height="1" fill="#a03040" opacity="0.6"/>
    <circle cx="93.2" cy="376.3" r="3.2" fill="#f2a438"/>
    <rect x="111" y="357" width="9" height="0.6" fill="#999"/>
    <rect x="98" y="376.5" width="9" height="0.6" fill="#bbb"/>
    <rect x="79" y="373.5" width="6" height="0.5" fill="#bbb"/>
    <rect x="20" y="382" width="10" height="0.6" fill="#bbb"/>
    <rect x="114" y="382" width="5" height="0.6" fill="#bbb"/>
  </g>
  <!-- thumb 5 -->
  <g id="t5">
    <rect x="59.5" y="398" width="4.5" height="4.5" fill="#222"/>
    <rect x="66" y="402" width="3.5" height="3.5" fill="#333"/>
    <rect x="51" y="405.5" width="4" height="1.2" fill="#5a7a9a"/>
    <rect x="52" y="399.8" width="6" height="0.5" fill="#888"/>
    <rect x="71" y="404" width="10" height="0.5" fill="#888"/>
  </g>
</g>

<!-- ===== MAIN SLIDE ===== -->
<rect x="231.5" y="125" width="473" height="267" fill="#e4e5e8"/>
<g id="mainslide" transform="translate(232,125.5)"><use href="#s2"/></g>

<!-- ===== STATUS BAR ===== -->
<rect x="0" y="407.3" width="800" height="14.5" fill="#f6f6f7"/>
<rect x="0" y="421" width="800" height="1" fill="#d8d8da"/>
<g id="status">
  <text x="6" y="417" class="st">Slide 2 of 5</text>
  <text x="595" y="417" class="st">Help Improve Office</text>
  <text x="673.5" y="417" class="st">Notes</text>
  <rect x="698.5" y="407.3" width="18.5" height="13.7" fill="#e0e0e2"/>
  <text x="760.5" y="417" class="st">86%</text>
  <path d="M665 416.5 h7 M666 416.5 v-2 h5 v2 M667.5 414.5 l1 -3 h2 l-1 3" fill="none" stroke="#777" stroke-width="0.6"/>
  <rect x="703.5" y="411" width="8" height="6.5" rx="0.5" fill="none" stroke="#555" stroke-width="0.8"/>
  <rect x="705" y="412.5" width="5" height="1.8" fill="#555"/>
  <g fill="none" stroke="#666" stroke-width="0.6">
    <rect x="724" y="410.5" width="3" height="3"/><rect x="728.3" y="410.5" width="3" height="3"/>
    <rect x="724" y="414.8" width="3" height="3"/><rect x="728.3" y="414.8" width="3" height="3"/>
    <path d="M743.5 410.5 h8 M744.5 410.5 v2 c0 2 1.5 3 3 3 c1.5 0 3 -1 3 -3 v-2 M747.5 415.5 v2 M745.5 418.5 h4"/>
    <path d="M785.5 413 v-2.5 h2.5 M790.5 410.5 h2.5 v2.5 M793 416 v2.5 h-2.5 M788 418.5 h-2.5 v-2.5 M787 417 l5 -5"/>
  </g>

</g>

<!-- ===== TASKBAR ===== -->
<rect x="0" y="422" width="800" height="28" fill="url(#tb)"/>
<g id="taskbar">
  <!-- windows logo -->
  <g>
    <rect x="315" y="429.2" width="6.6" height="6.6" fill="#1a8ad8"/>
    <rect x="322.3" y="429.2" width="6.6" height="6.6" fill="#2aa0e8"/>
    <rect x="315" y="436.5" width="6.6" height="6.6" fill="#1478c8"/>
    <rect x="322.3" y="436.5" width="6.6" height="6.6" fill="#1a8ad8"/>
  </g>
  <!-- search -->
  <circle cx="349.5" cy="434.5" r="4.3" fill="none" stroke="#1a1a1a" stroke-width="1.4"/>
  <path d="M346.4 437.6 l-3.8 3.8" stroke="#1a1a1a" stroke-width="1.6" stroke-linecap="round"/>
  <!-- task view -->
  <rect x="372" y="430" width="9" height="9" rx="1" fill="#d8d8d8"/>
  <rect x="367.5" y="433" width="9.5" height="9" rx="0.8" fill="#1e1e1e"/>
  <rect x="372" y="433" width="5" height="5.5" fill="#9a9a9a"/>
  <!-- folder -->
  <path d="M393 431 h5 l1.5 1.5 h7.5 v10 h-14 z" fill="#e8b632"/>
  <rect x="393" y="434" width="14" height="8.5" rx="0.5" fill="#f8d353"/>
  <rect x="393" y="439" width="14" height="3.5" fill="#2a7ac8"/>
  <!-- edge -->
  <circle cx="425.3" cy="436" r="6.9" fill="#1b6fc4"/>
  <path d="M425.3 429.1 a6.9 6.9 0 0 1 6.9 6.9 c0 2 -1.5 2.6 -3.2 2.6 c-2 0 -2.6 -1 -2.6 -2 c0 -2 -3 -3 -5 -2 c-1.8 0.8 -3 2 -3.2 3.2 c-0.8 -4.5 2 -8.7 7.1 -8.7 z" fill="#3cbf7e"/>
  <path d="M418.4 436 c0.5 -2.5 2.5 -4 4.5 -4 c2 0 3.5 1 3.5 2.5 c-2.5 -0.5 -4.5 1.2 -4.5 3.5 c0 2.5 2.5 4.5 5.5 4.5 c1.8 0 3.2 -0.5 4.3 -1.3 c-1.2 2.5 -3.8 4 -6.4 4 c-4 0 -7 -3 -6.9 -9.2 z" fill="#2a92dc"/>
  <circle cx="424.8" cy="437.5" r="2.1" fill="#9fe0f0"/>
  <circle cx="425.6" cy="437.8" r="1.2" fill="#2a7ac8"/>
  <!-- powerpoint -->
  <rect x="441" y="425" width="19" height="22" rx="2.5" fill="#f6eef2" opacity="0.9"/>
  <circle cx="451" cy="436" r="6.3" fill="#e8643a"/>
  <path d="M451 429.7 a6.3 6.3 0 0 1 6.3 6.3 h-6.3 z" fill="#f29a5a"/>
  <rect x="444" y="431.5" width="7.5" height="8.5" rx="1" fill="#c43e1c"/>
  <text x="445.6" y="438.8" style="font-size:6.5px;font-weight:bold;fill:#fff">P</text>
  <rect x="447" y="444.8" width="8" height="1.5" rx="0.75" fill="#2f6fc0"/>
  <!-- teams -->
  <circle cx="481" cy="432" r="2.5" fill="#7b83eb"/>
  <rect x="476" y="434.5" width="8" height="7" rx="2" fill="#7b83eb"/>
  <circle cx="476" cy="431" r="3" fill="#5059c9"/>
  <rect x="469.5" y="432" width="11" height="10" rx="1.5" fill="#5059c9"/>
  <text x="472" y="440.5" style="font-size:7px;font-weight:bold;fill:#fff">T</text>
  <rect x="424.5" y="445" width="2" height="1.2" rx="0.6" fill="#888"/>
  <rect x="475.5" y="445" width="2" height="1.2" rx="0.6" fill="#888"/>
  <!-- tray -->
  <path d="M692.5 437.5 l3.2 -3 l3.2 3" fill="none" stroke="#333" stroke-width="0.9"/>
  <path d="M709.5 434 a8 8 0 0 1 10 0 M711.2 436 a5.5 5.5 0 0 1 6.6 0 M712.9 438 a3 3 0 0 1 3.2 0" fill="none" stroke="#333" stroke-width="0.9"/>
  <circle cx="714.5" cy="439.6" r="0.7" fill="#333"/>
  <path d="M724.5 434.5 h2 l3 -2.5 v9 l-3 -2.5 h-2 z" fill="none" stroke="#333" stroke-width="0.8"/>
  <path d="M731 434.5 a2.5 2.5 0 0 1 0 4 M732.5 433 a4.5 4.5 0 0 1 0 7" fill="none" stroke="#333" stroke-width="0.7"/>
  <rect x="738" y="433.5" width="8" height="5" rx="1" fill="none" stroke="#333" stroke-width="0.8"/>
  <rect x="739" y="434.5" width="4.5" height="3" fill="#333"/>
  <rect x="746.3" y="435" width="0.9" height="2" fill="#333"/>
  <text x="788.5" y="435" text-anchor="end" style="font-size:7px;fill:#222">9:00 AM</text>
  <text x="788.5" y="443.5" text-anchor="end" style="font-size:7px;fill:#222">11/9/2021</text>
</g>

<!-- ===== SNAP POPUP ===== -->
<g id="snap">
  <rect x="794" y="32.5" width="2" height="12.7" fill="#c8654a"/>
  <rect x="659.2" y="23.4" width="135.3" height="50.8" rx="5" fill="url(#popg)" filter="url(#sh2)"/>
  <rect x="665.9" y="30.7" width="27.5" height="37.5" rx="1.8" fill="#196bc6"/>
  <rect x="695.9" y="30.9" width="27.4" height="37.1" rx="1.8" fill="#dcdddf" stroke="#c4c4c6" stroke-width="0.6"/>
  <rect x="730.3" y="30.9" width="36.4" height="37.1" rx="1.8" fill="#e0dcdc" stroke="#c8c4c4" stroke-width="0.6"/>
  <rect x="768.9" y="30.9" width="18.8" height="37.1" rx="1.8" fill="#e2dcdb" stroke="#c8c2c2" stroke-width="0.6"/>
</g>
</svg>
</body></html>
